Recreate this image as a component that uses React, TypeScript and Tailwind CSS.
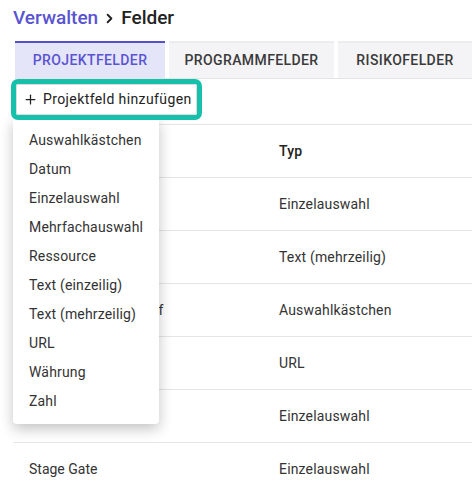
import { Plus, ChevronRight } from "lucide-react";

const MENU_ITEMS = [
  "Auswahlkästchen",
  "Datum",
  "Einzelauswahl",
  "Mehrfachauswahl",
  "Ressource",
  "Text (einzeilig)",
  "Text (mehrzeilig)",
  "URL",
  "Währung",
  "Zahl",
];

const ROWS = [
  { name: "Phase", type: "Einzelauswahl" },
  { name: "Beschreibung", type: "Text (mehrzeilig)" },
  { name: "Genehmigungsbedarf", type: "Auswahlkästchen" },
  { name: "Link", type: "URL" },
  { name: "Status", type: "Einzelauswahl" },
  { name: "Stage Gate", type: "Einzelauswahl" },
];

const TABS = [
  { label: "Projektfelder", active: true, width: "w-[150px]" },
  { label: "Programmfelder", active: false, width: "w-[165px]" },
  { label: "Risikofelder", active: false, width: "flex-1" },
];

const App = () => {
  return (
    <div className="relative w-[472px] h-[493px] overflow-hidden bg-white font-['Roboto',sans-serif] text-[#333] tracking-[0.01071em]">
      <h1 className="flex items-center h-[37px] pl-[13px] text-[19px] font-medium tracking-normal">
        <span className="text-[#5a54d1]">Verwalten</span>
        <ChevronRight className="w-[15px] h-[15px] mx-[4px] text-[#222]" strokeWidth={3} />
        <span className="text-[#222]">Felder</span>
      </h1>

      <div className="flex gap-[4px] ml-[15px] mt-[4px] border-b border-[#e4e4e4]">
        {TABS.map((tab) => (
          <div
            key={tab.label}
            className={`${tab.width} h-[37px] flex items-center justify-center uppercase text-[14px] font-medium tracking-[0.02857em] border-t-2 ${
              tab.active
                ? "bg-[#e5e5fa] border-[#5550c8] text-[#5a54d1]"
                : "bg-[#f4f4f6] border-[#ececee] text-[#3a3a3a]"
            }`}
          >
            {tab.label}
          </div>
        ))}
      </div>

      <div className="relative z-20 ml-[11px] w-[191px] h-[41px] rounded-[7px] border-[5px] border-[#16c0ab] bg-white">
        <button className="flex items-center gap-[5px] w-full h-full rounded-[3px] border border-[#dcdcdc] bg-white pl-[6px] text-[14px] tracking-[0.02857em] text-[#222]">
          <Plus className="w-[15px] h-[15px]" strokeWidth={2} />
          Projektfeld hinzufügen
        </button>
      </div>

      <div className="ml-[13px] mt-[4px]">
        <div className="flex h-[53px] items-center border-t border-[#e6e6e6] text-[14px] font-medium text-[#222]">
          <div className="w-[250px] pl-[16px]">Name</div>
          <div className="pl-[16px]">Typ</div>
        </div>
        {ROWS.map((row) => (
          <div
            key={row.name + row.type}
            className="flex h-[53px] items-center border-t border-[#e6e6e6] text-[14px] text-[#333]"
          >
            <div className="w-[250px] pl-[16px] whitespace-nowrap tracking-normal">{row.name}</div>
            <div className="pl-[16px]">{row.type}</div>
          </div>
        ))}
      </div>

      <div className="absolute z-10 left-[13px] top-[118px] w-[146px] rounded-[4px] bg-white py-[8px] shadow-[0_5px_14px_rgba(0,0,0,0.24)]">
        {MENU_ITEMS.map((item) => (
          <div key={item} className="flex items-center h-[29px] px-[16px] text-[14px] text-[#333]">
            {item}
          </div>
        ))}
      </div>
    </div>
  );
};

export default App;
